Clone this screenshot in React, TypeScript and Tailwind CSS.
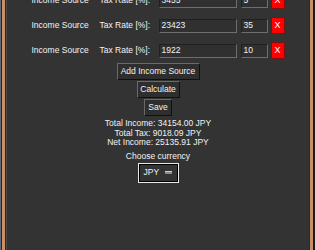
import React from "react";

const rows = [
  { amount: "3455", rate: "5" },
  { amount: "23423", rate: "35" },
  { amount: "1922", rate: "10" },
];

function Btn({ children, w }: { children: React.ReactNode; w: string }) {
  return (
    <div
      className={`${w} h-[17px] flex items-center justify-center bg-[#2e2e2e] border border-t-[#6a6a6a] border-l-[#6a6a6a] border-b-[#101010] border-r-[#101010] text-[#f2f2f2]`}
    >
      {children}
    </div>
  );
}

export default function App() {
  return (
    <div
      className="w-[315px] h-[250px] flex overflow-hidden bg-[#333333] text-[8.5px] text-[#f2f2f2]"
      style={{ fontFamily: '"Liberation Sans", Arial, sans-serif' }}
    >
      <div className="w-[1px] bg-[#5d6b7d]" />
      <div className="w-[1px] bg-[#2a2420]" />
      <div className="w-[3px] bg-[#c98f66]" />
      <div className="w-[1px] bg-[#2a2a2a]" />
      <div className="w-[1px] bg-[#4a4a4a]" />
      <div className="flex-1 flex flex-col items-center bg-[#333333]">
        <div className="flex flex-col gap-[8px] -mt-[8px]">
          {rows.map((r, i) => (
            <div key={i} className="flex items-center h-[17px] w-[253px]">
              <div className="w-[68px] leading-none">Income Source</div>
              <div className="w-[59px] leading-none">Tax Rate [%]:</div>
              <div className="w-[78px] h-[14px] flex items-center px-[2px] bg-[#303030] border border-[#6e6e6e] border-t-[#202020] border-l-[#202020] leading-none">
                {r.amount}
              </div>
              <div className="ml-[4px] w-[27px] h-[14px] flex items-center px-[2px] bg-[#303030] border border-[#6e6e6e] border-t-[#202020] border-l-[#202020] leading-none">
                {r.rate}
              </div>
              <div className="ml-[3px] w-[14px] h-[17px] flex items-center justify-center bg-[#ff0000] border border-[#7a1010] text-white text-[9px] leading-none">
                X
              </div>
            </div>
          ))}
        </div>
        <div className="mt-[4px] flex flex-col items-center gap-[1px]">
          <Btn w="w-[83px]">Add Income Source</Btn>
          <Btn w="w-[43px]">Calculate</Btn>
          <Btn w="w-[28px]">Save</Btn>
        </div>
        <div className="mt-[3px] flex flex-col items-center leading-[9.5px]">
          <div>Total Income: 34154.00 JPY</div>
          <div>Total Tax: 9018.09 JPY</div>
          <div>Net Income: 25135.91 JPY</div>
        </div>
        <div className="mt-[3px] leading-[10px]">Choose currency</div>
        <div className="mt-[2px] w-[41px] h-[20px] border border-[#e8e8e8] p-0 flex">
          <div className="flex-1 border border-[#000000] bg-[#333333] flex items-center pl-[4px]">
            <span className="leading-none">JPY</span>
            <div className="ml-[6px] w-[7px] h-[3px] bg-[#8a8a8a] border-t border-t-[#cfcfcf]" />
          </div>
        </div>
      </div>
      <div className="w-[1px] bg-[#2a2a2a]" />
      <div className="w-[3px] bg-[#c98f66]" />
      <div className="w-[2px] bg-[#1a1a1a]" />
    </div>
  );
}
